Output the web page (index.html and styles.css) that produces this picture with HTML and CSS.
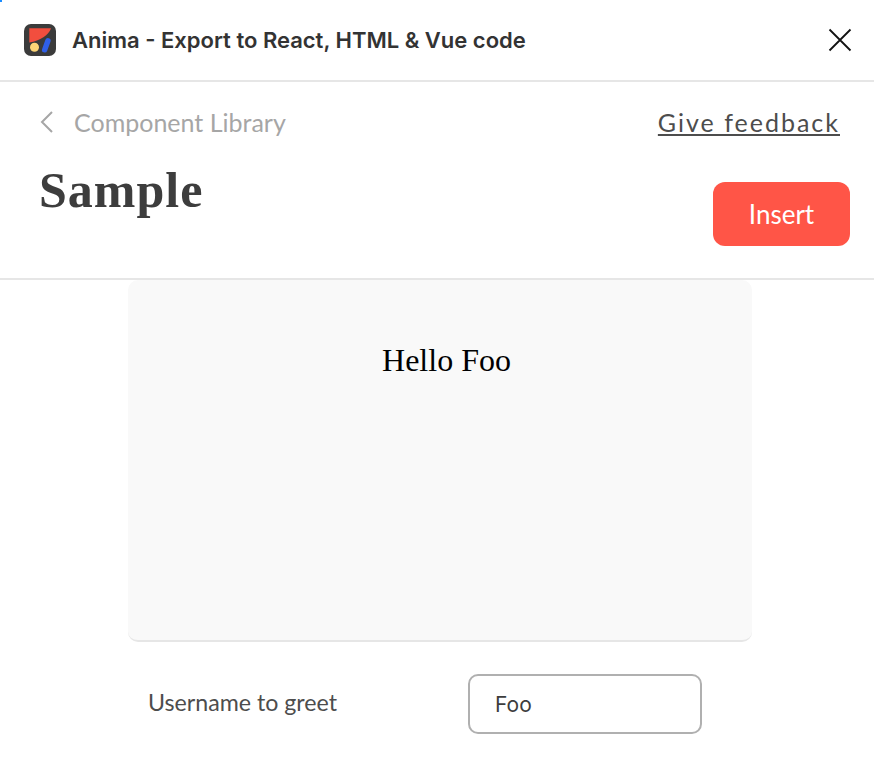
FILE: index.html
```html
<!DOCTYPE html>
<html>
<head>
    <title>Anima - Export to React, HTML &amp; Vue code</title>
    <link rel="stylesheet" href="styles.css">
</head>
<body>
    <div class="container">
        <div class="corner"></div>
        <div class="title-bar">
            <svg class="logo" width="32" height="32" viewBox="0 0 32 32">
                <rect width="32" height="32" rx="7" fill="#3b3b3b"/>
                <path d="M5.300 4.300H27C25 11 16 17 5.300 18.500Z" fill="#f24e3e"/>
                <circle cx="10.500" cy="23.300" r="4.500" fill="#fdd576"/>
                <rect x="-2.700" y="-7.500" width="5.400" height="15" rx="2.700" transform="translate(22.300 21.300) rotate(20)" fill="#2f5fe8"/>
            </svg>
            <span class="plugin-name">Anima - Export to React, HTML &amp; Vue code</span>
            <svg class="close" width="24" height="24" viewBox="0 0 24 24">
                <path d="M1.500 1.500L22.500 22.500M22.500 1.500L1.500 22.500" stroke="#111" stroke-width="1.800" fill="none"/>
            </svg>
        </div>

        <div class="page-header">
            <div class="nav-row">
                <a class="back-link" href="#">
                    <svg width="14" height="22" viewBox="0 0 14 22">
                        <path d="M12 1L2 11L12 21" stroke="#a6a6a6" stroke-width="2" fill="none"/>
                    </svg>
                    Component Library
                </a>
                <a class="feedback" href="#">Give feedback</a>
            </div>
            <div class="title-row">
                <h1>Sample</h1>
                <button class="insert-btn">Insert</button>
            </div>
        </div>

        <div class="preview">
            <p>Hello Foo</p>
        </div>

        <div class="prop-row">
            <label for="username">Username to greet</label>
            <input id="username" value="Foo" />
        </div>
    </div>
</body>
</html>
```

FILE: styles.css
```css
body {
    margin: 0;
    background-color: #ffffff;
    font-family: Lato, "Open Sans", sans-serif;
}

.container {
    display: flex;
    flex-direction: column;
    height: 760px;
    overflow: hidden;
}

/* sliver of the window behind, top left */
.corner {
    position: absolute;
    top: 0;
    left: 0;
    width: 2px;
    height: 2px;
    background-color: #1a8cff;
}

.title-bar {
    display: flex;
    align-items: center;
    height: 80px;
    padding: 0 22px 0 24px;
    border-bottom: 2px solid #e6e6e6;
}

.logo {
    margin-right: 16px;
}

.plugin-name {
    flex: 1;
    font-family: Inter, sans-serif;
    font-size: 22px;
    font-weight: 600;
    color: #333333;
}

.page-header {
    height: 196px;
    padding: 0 24px 0 40px;
    border-bottom: 2px solid #e6e6e6;
}

.nav-row {
    display: flex;
    justify-content: space-between;
    align-items: center;
    height: 80px;
    padding-right: 10px;
    margin-bottom: 1px;
}

.back-link {
    display: flex;
    align-items: center;
    gap: 20px;
    font-size: 25px;
    color: #a6a6a6;
    text-decoration: none;
}

.feedback {
    font-size: 25px;
    letter-spacing: 2px;
    color: #4d4d4d;
}

.title-row {
    display: flex;
    justify-content: space-between;
    align-items: flex-start;
}

h1 {
    margin: 0 0 0 -1px;
    font-family: "Liberation Serif", serif;
    font-size: 50px;
    line-height: 54px;
    font-weight: 700;
    letter-spacing: 1px;
    color: #3d3d3d;
}

.insert-btn {
    width: 137px;
    height: 64px;
    margin-top: 19px;
    padding-bottom: 1px;
    border: none;
    border-radius: 12px;
    background-color: #ff5547;
    color: #ffffff;
    font-family: inherit;
    font-size: 26px;
}

.preview {
    align-self: flex-start;
    box-sizing: border-box;
    width: 624px;
    height: 362px;
    margin-left: 128px;
    padding-top: 60px;
    padding-left: 13px;
    background-color: #f9f9f9;
    border-bottom: 2px solid #e6e6e6;
    border-radius: 10px;
    text-align: center;
}

.preview p {
    margin: 0;
    font-family: "Liberation Serif", serif;
    font-size: 32px;
    line-height: 40px;
    color: #000000;
}

.prop-row {
    display: flex;
    align-items: center;
    margin-top: 32px;
    padding-left: 148px;
}

label {
    width: 320px;
    margin-bottom: 4px;
    font-size: 23.200px;
    color: #4d4d4d;
}

input {
    box-sizing: border-box;
    width: 234px;
    height: 60px;
    padding: 0 25px;
    border: 2px solid #b0b0b0;
    border-radius: 10px;
    font-family: Inter, sans-serif;
    font-size: 21px;
    color: #3d3d3d;
}
```
